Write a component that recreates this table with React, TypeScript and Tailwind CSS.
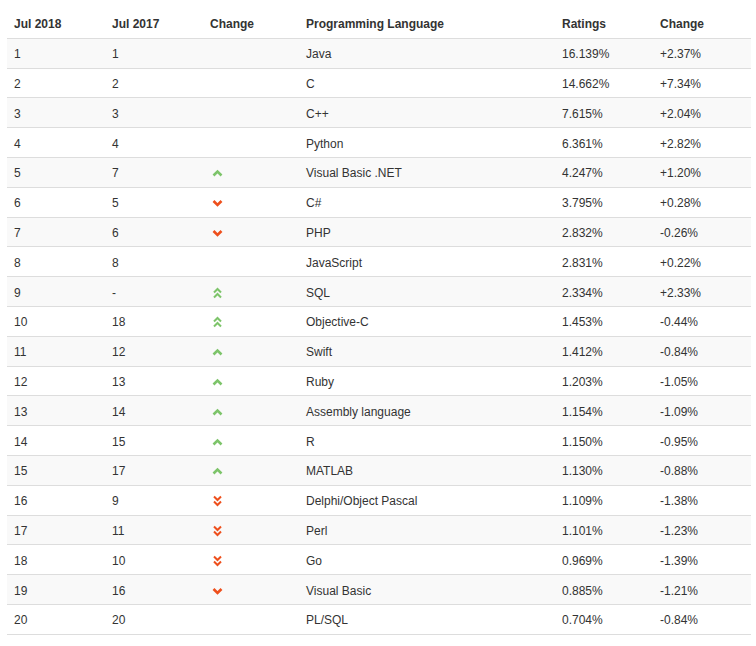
import React from "react";

type Trend = "" | "up" | "down" | "up2" | "down2";

interface LangRow {
  now: number;
  prev: string;
  trend: Trend;
  name: string;
  rating: string;
  change: string;
}

const rows: LangRow[] = [
  { now: 1, prev: "1", trend: "", name: "Java", rating: "16.139%", change: "+2.37%" },
  { now: 2, prev: "2", trend: "", name: "C", rating: "14.662%", change: "+7.34%" },
  { now: 3, prev: "3", trend: "", name: "C++", rating: "7.615%", change: "+2.04%" },
  { now: 4, prev: "4", trend: "", name: "Python", rating: "6.361%", change: "+2.82%" },
  { now: 5, prev: "7", trend: "up", name: "Visual Basic .NET", rating: "4.247%", change: "+1.20%" },
  { now: 6, prev: "5", trend: "down", name: "C#", rating: "3.795%", change: "+0.28%" },
  { now: 7, prev: "6", trend: "down", name: "PHP", rating: "2.832%", change: "-0.26%" },
  { now: 8, prev: "8", trend: "", name: "JavaScript", rating: "2.831%", change: "+0.22%" },
  { now: 9, prev: "-", trend: "up2", name: "SQL", rating: "2.334%", change: "+2.33%" },
  { now: 10, prev: "18", trend: "up2", name: "Objective-C", rating: "1.453%", change: "-0.44%" },
  { now: 11, prev: "12", trend: "up", name: "Swift", rating: "1.412%", change: "-0.84%" },
  { now: 12, prev: "13", trend: "up", name: "Ruby", rating: "1.203%", change: "-1.05%" },
  { now: 13, prev: "14", trend: "up", name: "Assembly language", rating: "1.154%", change: "-1.09%" },
  { now: 14, prev: "15", trend: "up", name: "R", rating: "1.150%", change: "-0.95%" },
  { now: 15, prev: "17", trend: "up", name: "MATLAB", rating: "1.130%", change: "-0.88%" },
  { now: 16, prev: "9", trend: "down2", name: "Delphi/Object Pascal", rating: "1.109%", change: "-1.38%" },
  { now: 17, prev: "11", trend: "down2", name: "Perl", rating: "1.101%", change: "-1.23%" },
  { now: 18, prev: "10", trend: "down2", name: "Go", rating: "0.969%", change: "-1.39%" },
  { now: 19, prev: "16", trend: "down", name: "Visual Basic", rating: "0.885%", change: "-1.21%" },
  { now: 20, prev: "20", trend: "", name: "PL/SQL", rating: "0.704%", change: "-0.84%" },
];

const TrendIcon = ({ trend }: { trend: Trend }) => {
  if (!trend) return null;
  const up = trend === "up" || trend === "up2";
  const color = up ? "#7dc46a" : "#ee4f1c";
  if (trend === "up" || trend === "down") {
    return (
      <svg width="15" height="12" viewBox="0 0 15 12" className="block">
        <polyline
          points={up ? "3.5,8.5 7.5,4.5 11.5,8.5" : "3.5,4 7.5,8 11.5,4"}
          fill="none"
          stroke={color}
          strokeWidth="2.6"
        />
      </svg>
    );
  }
  return (
    <svg width="15" height="12" viewBox="0 0 15 12" className="block">
      <g fill="none" stroke={color} strokeWidth="2">
        {up ? (
          <>
            <polyline points="4,5.5 7.5,2 11,5.5" />
            <polyline points="4,10.5 7.5,7 11,10.5" />
          </>
        ) : (
          <>
            <polyline points="4,1.5 7.5,5 11,1.5" />
            <polyline points="4,6.5 7.5,10 11,6.5" />
          </>
        )}
      </g>
    </svg>
  );
};

const cols = "grid grid-cols-[98px_98px_96px_256px_98px_98px]";

export default function App() {
  return (
    <div className="min-h-screen bg-white font-['Liberation_Sans',Arial,sans-serif] text-[12px] text-[#333]">
      <div className="ml-[7px] mt-[9px] w-[744px]">
        <div className={`${cols} h-[29.8px] items-center border-b border-[#ddd] pt-[1px] font-bold`}>
          <div className="px-[7px]">Jul 2018</div>
          <div className="px-[7px]">Jul 2017</div>
          <div className="px-[7px]">Change</div>
          <div className="px-[7px]">Programming Language</div>
          <div className="px-[7px]">Ratings</div>
          <div className="px-[7px]">Change</div>
        </div>
        {rows.map((r, i) => (
          <div
            key={r.now}
            className={`${cols} h-[29.8px] items-center border-b border-[#ddd] pt-[2px] ${
              i % 2 === 0 ? "bg-[#f9f9f9]" : "bg-white"
            }`}
          >
            <div className="px-[7px]">{r.now}</div>
            <div className="px-[7px]">{r.prev}</div>
            <div className="px-[7px]">
              <TrendIcon trend={r.trend} />
            </div>
            <div className="px-[7px]">{r.name}</div>
            <div className="px-[7px]">{r.rating}</div>
            <div className="px-[7px]">{r.change}</div>
          </div>
        ))}
      </div>
    </div>
  );
}
